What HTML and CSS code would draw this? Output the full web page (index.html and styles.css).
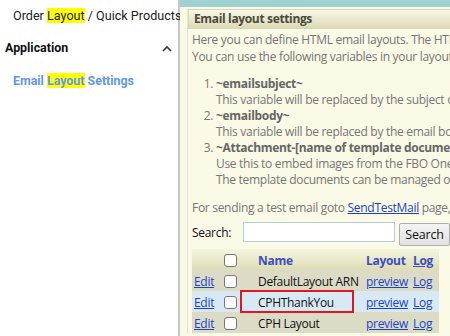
FILE: index.html
```html
<!DOCTYPE html>
<html>
<head>
<meta charset="utf-8">
<link rel="stylesheet" href="styles.css">
</head>
<body>
<div class="page">
  <aside class="sidebar">
    <div class="crumb">Order <mark>Layout</mark> / Quick Products</div>
    <div class="section">
      <span>Application</span>
      <svg class="chev" width="10" height="7" viewBox="0 0 10 7"><path d="M1 6 L5 2 L9 6" fill="none" stroke="#333" stroke-width="1.6"/></svg>
    </div>
    <div class="navlink">Email <mark>Layout</mark> Settings</div>
  </aside>
  <main class="main">
    <div class="topband"></div>
    <div class="panel">
      <div class="panel-head">Email layout settings</div>
      <div class="panel-body">
        <p class="intro">Here you can define HTML email layouts. The HTML layouts are used when sending emails.<br>You can use the following variables in your layouts:</p>
        <ol class="vars">
          <li><b>~emailsubject~</b><br>This variable will be replaced by the subject of the email.</li>
          <li><b>~emailbody~</b><br>This variable will be replaced by the email body.</li>
          <li><b>~Attachment-[name of template document]~</b><br>Use this to embed images from the FBO One template documents.<br>The template documents can be managed on the documents page.</li>
        </ol>
        <p class="test">For sending a test email goto <a href="#">SendTestMail</a> page, enter the layout name.</p>
        <div class="search">
          <label>Search:</label>
          <input type="text" class="search-input">
          <button class="search-btn">Search</button>
        </div>
        <table class="grid">
          <thead>
            <tr>
              <th class="c-edit"></th>
              <th class="c-chk"><span class="cb"></span></th>
              <th class="c-name">Name</th>
              <th class="c-lay">Layout</th>
              <th class="c-log"><a href="#">Log</a></th>
            </tr>
          </thead>
          <tbody>
            <tr class="r-khaki">
              <td class="c-edit"><a href="#">Edit</a></td>
              <td class="c-chk"><span class="cb"></span></td>
              <td class="c-name">DefaultLayout ARN</td>
              <td class="c-lay"><a href="#">preview</a></td>
              <td class="c-log"><a href="#">Log</a></td>
            </tr>
            <tr class="r-blue">
              <td class="c-edit"><a href="#">Edit</a></td>
              <td class="c-chk"><span class="cb"></span></td>
              <td class="c-name marked">CPHThankYou</td>
              <td class="c-lay"><a href="#">preview</a></td>
              <td class="c-log"><a href="#">Log</a></td>
            </tr>
            <tr class="r-khaki">
              <td class="c-edit"><a href="#">Edit</a></td>
              <td class="c-chk"><span class="cb"></span></td>
              <td class="c-name">CPH Layout</td>
              <td class="c-lay"><a href="#">preview</a></td>
              <td class="c-log"><a href="#">Log</a></td>
            </tr>
          </tbody>
        </table>
      </div>
    </div>
  </main>
</div>
</body>
</html>
```
FILE: styles.css
```css
html, body {
  margin: 0;
  padding: 0;
  width: 450px;
  height: 336px;
  overflow: hidden;
  background: #fff;
}
.page {
  display: flex;
  width: 450px;
  height: 336px;
}
mark {
  background: #ffff00;
  color: inherit;
}
.sidebar {
  width: 178px;
  flex: none;
  border-right: 2px solid #c8c8c8;
  font-family: Roboto, "Liberation Sans", sans-serif;
  background: #fff;
}
.crumb {
  font-size: 12.6px;
  color: #222;
  padding: 8px 0 0 13px;
  white-space: nowrap;
  height: 20px;
}
.section {
  display: flex;
  align-items: center;
  justify-content: space-between;
  padding: 12px 6px 0 5px;
  font-size: 12.4px;
  font-weight: bold;
  color: #111;
}
.chev { margin-top: 1px; }
.navlink {
  padding: 18px 0 0 13px;
  font-size: 12.4px;
  font-weight: bold;
  color: #6297ee;
  white-space: nowrap;
}
.main {
  flex: 1;
  min-width: 0;
  background: #fafae6;
  overflow: hidden;
}
.topband {
  height: 7px;
  background: #9dd2d0;
}
.panel {
  margin: 2px 0 0 7px;
  border-left: 1px solid #e6e6cc;
  font-family: "Open Sans", "Noto Sans", sans-serif;
  font-size: 12px;
  letter-spacing: -0.3px;
  color: #767676;
  white-space: nowrap;
}
.panel-head {
  height: 18px;
  line-height: 18px;
  border: 1px solid #d8d8b8;
  border-right: none;
  background: linear-gradient(#f8f8e6, #dcdab6);
  font-weight: bold;
  font-size: 12px;
  letter-spacing: -0.35px;
  color: #4a4a3c;
  padding-left: 5px;
}
.panel-body {
  padding: 2px 0 0 4px;
}
.intro {
  margin: 0;
  line-height: 17px;
}
.vars {
  margin: 11px 0 0 0;
  padding-left: 24px;
  line-height: 16px;
}
.vars b { color: #666; }
.test {
  margin: 12px 0 0 0;
  line-height: 16px;
}
a { color: #1a44cc; }
.search {
  display: flex;
  align-items: center;
  margin-top: 3px;
  color: #111;
}
.search label { width: 51px; flex: none; }
.search-input {
  width: 146px;
  height: 16px;
  border: 1px solid #b4cbe6;
  padding: 1px 2px;
  margin: 0 4px 2px 0;
  background: #fff;
}
.search-btn {
  margin-top: 4px;
  height: 23px;
  width: 51px;
  padding: 0;
  font-family: "Open Sans", "Noto Sans", sans-serif;
  font-size: 12.5px;
  letter-spacing: -0.2px;
  color: #111;
  border: 1px solid #adadad;
  border-radius: 2px;
  background: linear-gradient(#f3f3f3, #e2e2e2);
}
.grid {
  border-collapse: collapse;
  margin-top: 3px;
  color: #111;
}
.grid th, .grid td {
  padding: 0;
  text-align: left;
  white-space: nowrap;
}
.grid thead tr {
  background: linear-gradient(#f5f5df, #dedcb6);
}
.grid th {
  height: 20px;
  color: #3a4fc0;
  font-weight: bold;
  padding-top: 1px;
}
.grid th a { color: #3a4fc0; }
.r-khaki { background: #dcdcc6; }
.r-blue { background: #d8e9f6; }
.grid tbody td { height: 20px; padding-top: 1px; }
.c-edit { width: 30px; padding-left: 2px !important; }
.c-chk { width: 30px; }
.c-name { width: 108px; padding-left: 4px !important; }
.c-lay { width: 47px; }
.c-log { width: 22px; padding-right: 4px !important; }
.cb {
  display: block;
  width: 11px;
  height: 11px;
  border: 1px solid #777;
  border-radius: 3px;
  background: #fff;
}
.marked { position: relative; }
.marked::after {
  content: "";
  position: absolute;
  left: -14px;
  top: -1px;
  width: 110px;
  height: 19px;
  border: 2px solid #e3161f;
}
```
